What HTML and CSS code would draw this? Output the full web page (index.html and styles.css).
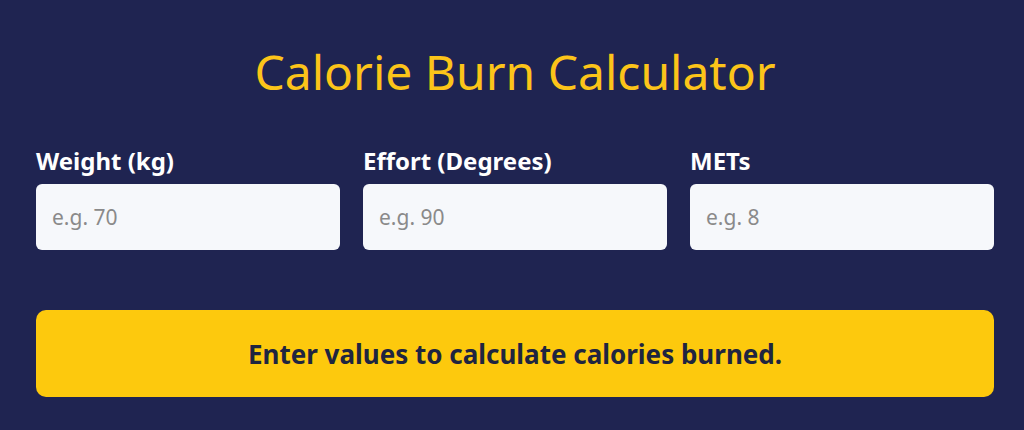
FILE: index.html
```html
<!DOCTYPE html>
<html lang="en">
<head>
<meta charset="utf-8">
<title>Calorie Burn Calculator</title>
<link rel="stylesheet" href="styles.css">
</head>
<body>
<main class="calculator">
  <h1 class="calculator-title">Calorie Burn Calculator</h1>
  <div class="fields">
    <label class="field">
      <span class="field-label">Weight (kg)</span>
      <input class="field-input" type="number" placeholder="e.g. 70">
    </label>
    <label class="field">
      <span class="field-label">Effort (Degrees)</span>
      <input class="field-input" type="number" placeholder="e.g. 90">
    </label>
    <label class="field">
      <span class="field-label">METs</span>
      <input class="field-input" type="number" placeholder="e.g. 8">
    </label>
  </div>
  <div class="result">Enter values to calculate calories burned.</div>
</main>
</body>
</html>
```
FILE: styles.css
```css
html, body {
  margin: 0;
  padding: 0;
  background: #1f2451;
}

body {
  font-family: "Noto Sans", "Open Sans", sans-serif;
  color: #ffffff;
}

.calculator {
  padding: 40px 30px 30px 36px;
  display: flex;
  flex-direction: column;
}

.calculator-title {
  margin: 0 0 42px;
  text-align: center;
  font-size: 48px;
  font-weight: 400;
  line-height: 64px;
  color: #fcc419;
}

.fields {
  display: grid;
  grid-template-columns: repeat(3, 304px);
  column-gap: 23px;
}

.field {
  display: flex;
  flex-direction: column;
  gap: 8px;
}

.field-label {
  font-size: 24px;
  font-weight: 700;
  line-height: 30px;
  color: #ffffff;
}

.field-input {
  box-sizing: border-box;
  height: 66px;
  width: 100%;
  border: none;
  border-radius: 6px;
  background: #f6f8fb;
  padding: 0 16px;
  font-family: inherit;
  font-size: 21px;
  color: #333;
  outline: none;
}

.field-input::placeholder {
  color: #8a8a8a;
}

.result {
  margin-top: 60px;
  width: 958px;
  height: 87px;
  box-sizing: border-box;
  border-radius: 10px;
  background: #fdc90d;
  color: #1f2540;
  font-size: 26px;
  font-weight: 700;
  display: flex;
  align-items: center;
  justify-content: center;
}
```
